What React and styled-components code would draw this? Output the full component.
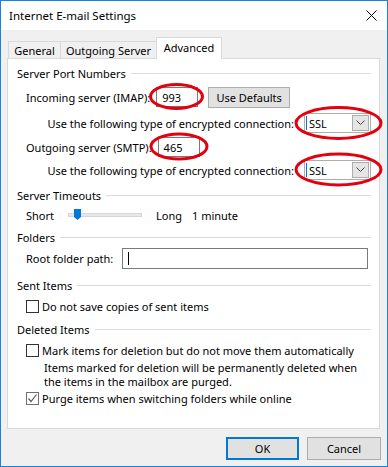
import React from 'react';
import styled, { createGlobalStyle } from 'styled-components';

const Global = createGlobalStyle`
    html, body {
        margin: 0;
        padding: 0;
        background: #ffffff;
    }
    * {
        box-sizing: border-box;
    }
`;

const Window = styled.div`
    position: relative;
    width: 388px;
    height: 467px;
    border: 1px solid #1883d7;
    background: #f0f0f0;
    display: flex;
    flex-direction: column;
    font-family: "Noto Sans", "Open Sans", sans-serif;
    font-size: 11px;
    color: #000;
`;

const TitleBar = styled.div`
    height: 29px;
    background: #ffffff;
    display: flex;
    align-items: center;
    justify-content: space-between;
    padding: 0 10px 0 8px;
    font-size: 11.5px;
`;

const Body = styled.div`
    padding: 7px 7px 0 6px;
    display: flex;
    flex-direction: column;
`;

const TabRow = styled.div`
    display: flex;
    align-items: flex-end;
    height: 21px;
    margin-left: 1px;
`;

const Tab = styled.div`
    position: relative;
    width: ${p => p.$w}px;
    height: ${p => (p.$active ? '22px' : '17px')};
    margin-bottom: ${p => (p.$active ? '-1px' : '0')};
    margin-left: ${p => (p.$first ? '0' : '-1px')};
    z-index: ${p => (p.$active ? 2 : 1)};
    padding-bottom: ${p => (p.$active ? '3px' : '0')};
    background: ${p => (p.$active ? '#ffffff' : '#f0f0f0')};
    border: 1px solid #d9d9d9;
    border-bottom: none;
    display: flex;
    align-items: center;
    justify-content: center;
    white-space: nowrap;
`;

const Panel = styled.div`
    height: 371px;
    background: #ffffff;
    border: 1px solid #d9d9d9;
    padding: 5px 8px 0 9px;
    display: flex;
    flex-direction: column;
`;

const GroupHeader = styled.div`
    height: 18px;
    margin-top: ${p => p.$mt || 0}px;
    display: flex;
    align-items: center;
    white-space: nowrap;
    &::after {
        content: '';
        flex: 1;
        height: 1px;
        background: #dcdcdc;
        margin-left: 5px;
    }
`;

const Row = styled.div`
    height: ${p => p.$h || 18}px;
    margin-top: ${p => p.$mt || 0}px;
    padding-left: ${p => p.$indent || 9}px;
    display: flex;
    align-items: center;
    justify-content: ${p => (p.$end ? 'flex-end' : 'flex-start')};
    white-space: nowrap;
`;

const TextBox = styled.div`
    flex-shrink: 0;
    width: ${p => p.$w}px;
    height: ${p => p.$h || 20}px;
    margin-left: ${p => p.$ml || 0}px;
    border: 1px solid #7a7a7a;
    background: #fff;
    display: flex;
    align-items: center;
    padding-left: 5px;
`;

const Caret = styled.span`
    width: 1px;
    height: 13px;
    background: #000;
`;

const Button = styled.div`
    flex-shrink: 0;
    width: ${p => p.$w}px;
    height: ${p => p.$h || 23}px;
    margin-left: ${p => p.$ml || 0}px;
    background: #e1e1e1;
    border: ${p => (p.$primary ? '2px solid #0078d7' : '1px solid #adadad')};
    display: flex;
    align-items: center;
    justify-content: center;
`;

const Select = styled.div`
    flex-shrink: 0;
    width: 67px;
    height: 20px;
    margin-left: 10px;
    border: 1px solid #adadad;
    background: #fff;
    display: flex;
    align-items: center;
    padding: 0 1px;
`;

const SelectValue = styled.span`
    flex: 1;
    display: flex;
    align-items: center;
    gap: 2px;
    &::before {
        content: '';
        width: 1px;
        height: 14px;
        background: #0078d7;
    }
`;

const DropButton = styled.span`
    width: 17px;
    height: 16px;
    background: #e5e5e5;
    border: 1px solid #adadad;
    display: flex;
    align-items: center;
    justify-content: center;
`;

const Track = styled.div`
    position: relative;
    flex-shrink: 0;
    width: 74px;
    height: 4px;
    margin: 0 14px 0 14px;
    background: #e7e7e7;
    border: 1px solid #d6d6d6;
`;

const Thumb = styled.svg`
    position: absolute;
    left: 5px;
    top: -5px;
`;

const Minutes = styled.span`
    margin-left: 10px;
`;

const Check = styled.span`
    flex-shrink: 0;
    width: 13px;
    height: 13px;
    border: 1px solid ${p => (p.$checked ? '#707070' : '#333333')};
    background: #fff;
    margin-right: 3px;
    display: flex;
    align-items: center;
    justify-content: center;
`;

const Note = styled.div`
    margin-top: 2px;
    padding-left: 27px;
    line-height: 14px;
    white-space: nowrap;
`;

const Footer = styled.div`
    display: flex;
    justify-content: flex-end;
    gap: 8px;
    margin-top: 8px;
    margin-right: -1px;
`;

const Marks = styled.svg`
    position: absolute;
    left: -1px;
    top: -1px;
    pointer-events: none;
`;

function Checkbox({ checked }) {
    return (
        <Check $checked={checked}>
            {checked && (
                <svg width="11" height="11" viewBox="0 0 11 11">
                    <path d="M1.5 5.5 L4 8.5 L9.5 1.5" fill="none" stroke="#5a5a5a" strokeWidth="1.2" />
                </svg>
            )}
        </Check>
    );
}

function Combo() {
    return (
        <Select>
            <SelectValue>SSL</SelectValue>
            <DropButton>
                <svg width="9" height="6" viewBox="0 0 9 6">
                    <path d="M0.5 0.5 L4.5 4.5 L8.5 0.5" fill="none" stroke="#444" strokeWidth="1" />
                </svg>
            </DropButton>
        </Select>
    );
}

export default function App() {
    return (
        <Window>
            <Global />
            <TitleBar>
                <span>Internet E-mail Settings</span>
                <svg width="11" height="11" viewBox="0 0 11 11">
                    <path d="M0.5 0.5 L10.5 10.5 M10.5 0.5 L0.5 10.5" stroke="#000" strokeWidth="1" />
                </svg>
            </TitleBar>
            <Body>
                <TabRow>
                    <Tab $first $w={53}>General</Tab>
                    <Tab $w={97}>Outgoing Server</Tab>
                    <Tab $active $w={66}>Advanced</Tab>
                </TabRow>
                <Panel>
                    <GroupHeader>Server Port Numbers</GroupHeader>
                    <Row $h={20} $mt={5}>
                        Incoming server (IMAP):
                        <TextBox $w={42} $ml={6}>993</TextBox>
                        <Button $w={82} $h={21} $ml={10}>Use Defaults</Button>
                    </Row>
                    <Row $h={20} $mt={6} $end>
                        Use the following type of encrypted connection:
                        <Combo />
                    </Row>
                    <Row $h={20} $mt={4}>
                        Outgoing server (SMTP):
                        <TextBox $w={42} $ml={6}>465</TextBox>
                    </Row>
                    <Row $h={20} $mt={3} $end>
                        Use the following type of encrypted connection:
                        <Combo />
                    </Row>

                    <GroupHeader $mt={6}>Server Timeouts</GroupHeader>
                    <Row $mt={2}>
                        Short
                        <Track>
                            <Thumb width="7" height="11" viewBox="0 0 7 11">
                                <path d="M0 0 H7 V8 L3.5 11 L0 8 Z" fill="#0078d7" />
                            </Thumb>
                        </Track>
                        Long
                        <Minutes>1 minute</Minutes>
                    </Row>

                    <GroupHeader $mt={4}>Folders</GroupHeader>
                    <Row $h={21} $mt={2}>
                        Root folder path:
                        <TextBox $w={246} $h={21} $ml={9}>
                            <Caret />
                        </TextBox>
                    </Row>

                    <GroupHeader $mt={7}>Sent Items</GroupHeader>
                    <Row $mt={3}>
                        <Checkbox />
                        Do not save copies of sent items
                    </Row>

                    <GroupHeader $mt={5}>Deleted Items</GroupHeader>
                    <Row $mt={3}>
                        <Checkbox />
                        Mark items for deletion but do not move them automatically
                    </Row>
                    <Note>
                        Items marked for deletion will be permanently deleted when<br />
                        the items in the mailbox are purged.
                    </Note>
                    <Row>
                        <Checkbox checked />
                        Purge items when switching folders while online
                    </Row>
                </Panel>
                <Footer>
                    <Button $w={73} $primary>OK</Button>
                    <Button $w={74}>Cancel</Button>
                </Footer>
            </Body>
            <Marks width="388" height="467" viewBox="0 0 388 467">
                <g fill="none" stroke="#e3000f" strokeWidth="3">
                    <ellipse cx="176.5" cy="96.5" rx="26" ry="12" />
                    <ellipse cx="338.5" cy="123" rx="42.5" ry="15.5" />
                    <ellipse cx="179" cy="146.5" rx="28" ry="12.5" />
                    <ellipse cx="338.5" cy="169.5" rx="42.5" ry="15.5" />
                </g>
            </Marks>
        </Window>
    );
}
